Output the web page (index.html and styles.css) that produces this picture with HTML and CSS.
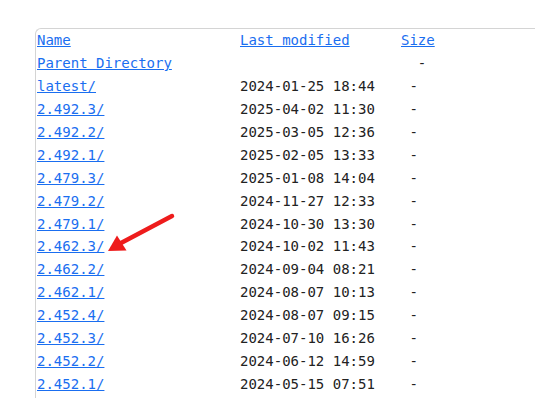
FILE: index.html
```html
<!DOCTYPE html>
<html>
<head>
<meta charset="utf-8">
<link rel="stylesheet" href="styles.css">
</head>
<body>
<div class="page">
  <div class="panel">
    <table class="listing">
      <tr><td class="c-name"><a href="#">Name</a></td><td class="c-date"><a href="#">Last modified</a></td><td class="c-size"><a href="#">Size</a></td></tr>
      <tr><td class="c-name"><a href="#">Parent Directory</a></td><td class="c-date"></td><td class="c-size">&nbsp;&nbsp;-</td></tr>
      <tr><td class="c-name"><a href="#">latest/</a></td><td class="c-date">2024-01-25 18:44</td><td class="c-size">&nbsp;-</td></tr>
      <tr><td class="c-name"><a href="#">2.492.3/</a></td><td class="c-date">2025-04-02 11:30</td><td class="c-size">&nbsp;-</td></tr>
      <tr><td class="c-name"><a href="#">2.492.2/</a></td><td class="c-date">2025-03-05 12:36</td><td class="c-size">&nbsp;-</td></tr>
      <tr><td class="c-name"><a href="#">2.492.1/</a></td><td class="c-date">2025-02-05 13:33</td><td class="c-size">&nbsp;-</td></tr>
      <tr><td class="c-name"><a href="#">2.479.3/</a></td><td class="c-date">2025-01-08 14:04</td><td class="c-size">&nbsp;-</td></tr>
      <tr><td class="c-name"><a href="#">2.479.2/</a></td><td class="c-date">2024-11-27 12:33</td><td class="c-size">&nbsp;-</td></tr>
      <tr><td class="c-name"><a href="#">2.479.1/</a></td><td class="c-date">2024-10-30 13:30</td><td class="c-size">&nbsp;-</td></tr>
      <tr><td class="c-name"><a href="#">2.462.3/</a></td><td class="c-date">2024-10-02 11:43</td><td class="c-size">&nbsp;-</td></tr>
      <tr><td class="c-name"><a href="#">2.462.2/</a></td><td class="c-date">2024-09-04 08:21</td><td class="c-size">&nbsp;-</td></tr>
      <tr><td class="c-name"><a href="#">2.462.1/</a></td><td class="c-date">2024-08-07 10:13</td><td class="c-size">&nbsp;-</td></tr>
      <tr><td class="c-name"><a href="#">2.452.4/</a></td><td class="c-date">2024-08-07 09:15</td><td class="c-size">&nbsp;-</td></tr>
      <tr><td class="c-name"><a href="#">2.452.3/</a></td><td class="c-date">2024-07-10 16:26</td><td class="c-size">&nbsp;-</td></tr>
      <tr><td class="c-name"><a href="#">2.452.2/</a></td><td class="c-date">2024-06-12 14:59</td><td class="c-size">&nbsp;-</td></tr>
      <tr><td class="c-name"><a href="#">2.452.1/</a></td><td class="c-date">2024-05-15 07:51</td><td class="c-size">&nbsp;-</td></tr>
    </table>
  </div>
  <svg class="arrow" width="535" height="398" viewBox="0 0 535 398">
    <line x1="172" y1="216" x2="121" y2="243" stroke="#ee1c1c" stroke-width="4.5" stroke-linecap="round"/>
    <polygon points="108,251 117,235.5 126.5,250.5" fill="#ee1c1c"/>
  </svg>
</div>
</body>
</html>
```
FILE: styles.css
```css
html, body {
  margin: 0;
  padding: 0;
  background: #ffffff;
}
.page {
  position: relative;
  width: 535px;
  height: 398px;
  overflow: hidden;
  padding: 28px 0 0 35px;
  box-sizing: border-box;
}
.panel {
  border-top: 1px solid #d4d4d4;
  border-left: 1px solid #d4d4d4;
  border-top-left-radius: 6px;
  height: 100%;
  padding: 0 0 0 1px;
  box-sizing: border-box;
}
.listing {
  border-collapse: collapse;
  font-family: "DejaVu Sans Mono", monospace;
  font-size: 14px;
  color: #222222;
}
.listing td {
  padding: 0;
  height: 22.93px;
  line-height: 22.93px;
  white-space: pre;
  vertical-align: middle;
}
.listing a {
  color: #1a6ef0;
  text-decoration: underline;
}
.c-name { width: 203px; }
.c-date { width: 161px; }
.c-size { width: 60px; }
.arrow {
  position: absolute;
  left: 0;
  top: 0;
  pointer-events: none;
}
```
